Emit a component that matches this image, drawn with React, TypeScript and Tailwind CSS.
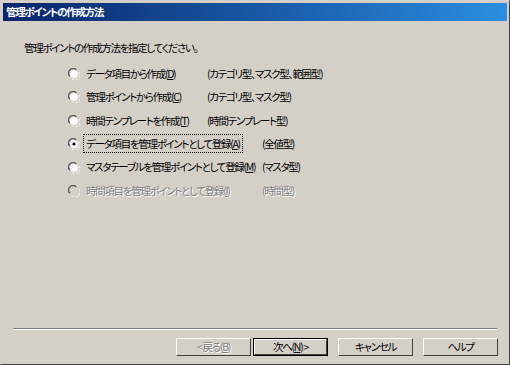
import React from 'react';

const font = {
  fontFamily: '"Noto Sans CJK JP", "Liberation Sans", sans-serif',
  fontFeatureSettings: '"palt"',
};

type Opt = {
  label: React.ReactNode;
  note: string;
  noteCol: 'a' | 'b';
  checked?: boolean;
  disabled?: boolean;
  focused?: boolean;
};

const U = ({ c }: { c: string }) => <span className="underline underline-offset-1">{c}</span>;

const options: Opt[] = [
  { label: <>データ項目から作成(<U c="D" />)</>, note: '(カテゴリ型、マスク型、範囲型)', noteCol: 'a' },
  { label: <>管理ポイントから作成(<U c="C" />)</>, note: '(カテゴリ型、マスク型)', noteCol: 'a' },
  { label: <>時間テンプレートを作成(<U c="T" />)</>, note: '(時間テンプレート型)', noteCol: 'a' },
  { label: <>データ項目を管理ポイントとして登録(<U c="A" />)</>, note: '(全値型)', noteCol: 'b', checked: true, focused: true },
  { label: <>マスタテーブルを管理ポイントとして登録(<U c="M" />)</>, note: '(マスタ型)', noteCol: 'b' },
  { label: <>時間項目を管理ポイントとして登録(<U c="I" />)</>, note: '(時間型)', noteCol: 'b', disabled: true },
];

const dim = 'text-[#808080] [text-shadow:1px_1px_0_#fff]';
const txt = 'text-[10.5px] tracking-[-1.3px] leading-none whitespace-nowrap';

function Radio({ checked, disabled }: { checked?: boolean; disabled?: boolean }) {
  return (
    <svg width="12" height="12" viewBox="0 0 12 12" className="shrink-0">
      <path d="M1 8 A5 5 0 0 1 8 1" stroke="#808080" fill="none" />
      <path d="M2 8.5 A4 4 0 0 1 8.5 2" stroke="#404040" fill="none" />
      <circle cx="6" cy="6" r="4" fill={disabled ? '#d4d0c8' : '#fff'} />
      <path d="M11 4 A5 5 0 0 1 4 11" stroke="#fff" fill="none" />
      <path d="M10 4 A4 4 0 0 1 4 10" stroke="#d4d0c8" fill="none" />
      {checked && <circle cx="6" cy="6" r="1.6" fill="#000" />}
    </svg>
  );
}

function Btn({ children, def, disabled }: { children: React.ReactNode; def?: boolean; disabled?: boolean }) {
  return (
    <div className={`w-[75px] h-[18px] bg-[#d4d0c8] ${def ? 'border border-black' : ''}`}>
      <div className={`w-full h-full border-t border-l border-white border-r border-b border-r-[#404040] border-b-[#404040] flex items-center justify-center ${txt}`}>
        <span className={disabled ? dim : 'text-black'}>{children}</span>
      </div>
    </div>
  );
}

export default function App() {
  return (
    <div
      className="w-[510px] h-[365px] bg-[#d4d0c8] border-t border-l border-[#d4d0c8] border-r border-b border-r-[#404040] border-b-[#404040] flex flex-col"
      style={font}
    >
      <div className="mx-[2px] mt-[2px] h-[18px] bg-gradient-to-r from-[#0a246a] to-[#2c8ee0] flex items-center pl-[3px]">
        <span className={`text-white font-bold ${txt}`}>管理ポイントの作成方法</span>
      </div>
      <div className="flex-1 flex flex-col">
        <div className="pl-[23px] pt-[19px]">
          <div className={`h-[16px] flex items-center text-black ${txt}`}>管理ポイントの作成方法を指定してください。</div>
        </div>
        <div className="pl-[67px] pt-[10px] flex flex-col gap-[7.4px]">
          {options.map((o, i) => (
            <div key={i} className={`flex items-center h-[16px] ${txt}`}>
              <Radio checked={o.checked} disabled={o.disabled} />
              <div className={`${o.noteCol === 'a' ? 'w-[127px]' : 'w-[182px]'} pl-[5px] shrink-0`}>
                <span
                  className={`${o.focused ? 'outline outline-1 outline-dotted outline-black outline-offset-1' : ''} px-[1px] ${
                    o.disabled ? dim : 'text-black'
                  }`}
                >
                  {o.label}
                </span>
              </div>
              <span className={o.disabled ? dim : 'text-black'}>{o.note}</span>
            </div>
          ))}
        </div>
        <div className="flex-1" />
        <div className="mx-[12px] border-t border-[#808080] border-b border-b-white" />
        <div className="flex justify-end items-center pr-[11px] pt-[8px] pb-[8px]">
          <div className="flex gap-[2px]">
            <Btn disabled>&lt; 戻る(<U c="B" />)</Btn>
            <Btn def>次へ(<U c="N" />) &gt;</Btn>
          </div>
          <div className="ml-[10px]">
            <Btn>キャンセル</Btn>
          </div>
          <div className="ml-[10px]">
            <Btn>ヘルプ</Btn>
          </div>
        </div>
      </div>
    </div>
  );
}
